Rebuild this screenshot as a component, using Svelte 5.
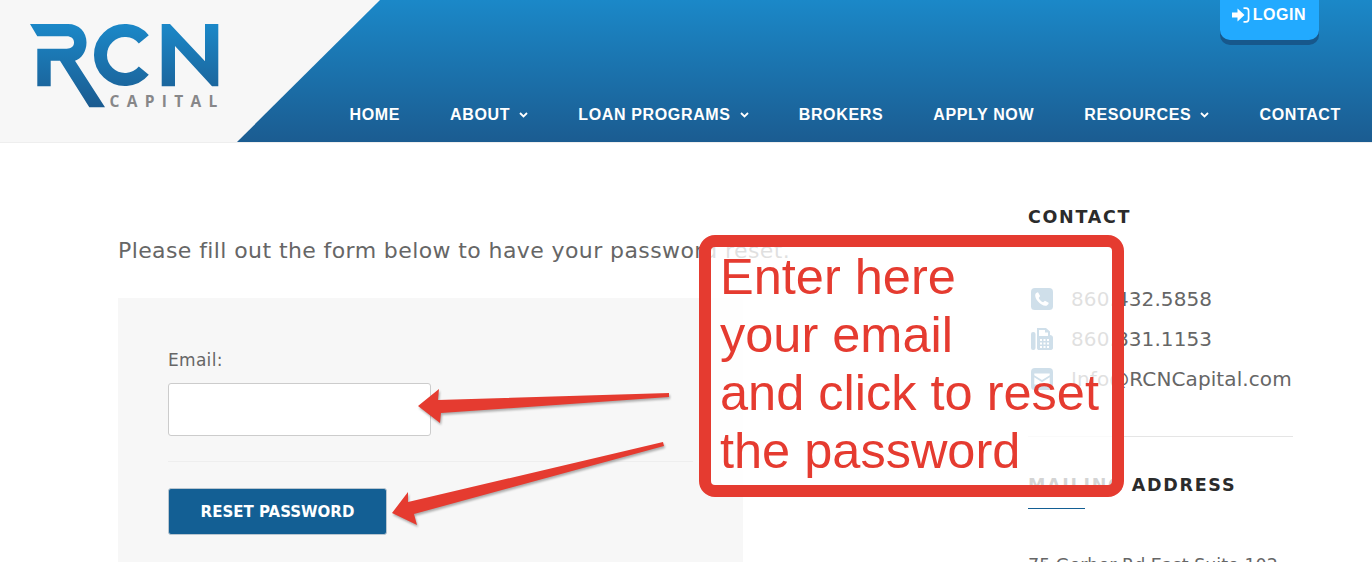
<script lang="ts">
    const navItems = [
        { label: 'HOME' },
        { label: 'ABOUT', sub: true },
        { label: 'LOAN PROGRAMS', sub: true },
        { label: 'BROKERS' },
        { label: 'APPLY NOW' },
        { label: 'RESOURCES', sub: true },
        { label: 'CONTACT' }
    ];
</script>

<div class="page">
    <header class="top">
        <a class="logo" href="/" aria-label="RCN Capital">
            <svg width="237" height="142" viewBox="0 0 237 142" aria-hidden="true">
                <defs>
                    <linearGradient id="logoBlue" gradientUnits="userSpaceOnUse" x1="0" y1="24" x2="0" y2="107">
                        <stop offset="0" stop-color="#1b88c8" />
                        <stop offset="1" stop-color="#1b5b90" />
                    </linearGradient>
                </defs>
                <path fill="url(#logoBlue)" d="M30 24H68C79 24 86.500 32 86.500 42.500C86.500 52 81 59 75 60.700L105 107.300H89.300L60 60.700H50.700V86.300H37.300V48.700H66.700C71 48.700 74 46.500 74 42.500C74 38.500 71 36.300 66.700 36.300H37.300Z" />
                <path fill="none" stroke="url(#logoBlue)" stroke-width="13" d="M143.800 39.300A24.500 24.500 0 1 0 143.800 70.700" />
                <path fill="url(#logoBlue)" d="M161.700 24H170L205 61.300V24H218.300V86.300H212L175 46V86.300H161.700Z" />
                <text class="capital" x="109.500" y="107">CAPITAL</text>
            </svg>
        </a>
        <div class="band">
            <a class="login" href="/">
                <svg width="18" height="16" viewBox="0 0 18 16" aria-hidden="true">
                    <path fill="#fff" d="M0 5.500H5.500V1.500L12.500 8L5.500 14.500V10.500H0Z" />
                    <path fill="none" stroke="#fff" stroke-width="1.700" d="M11.500 1.200H14C15.800 1.200 16.600 2.400 16.600 4V12C16.600 13.600 15.800 14.800 14 14.800H11.500" />
                </svg>
                LOGIN
            </a>
            <nav class="menu">
                {#each navItems as item}
                    <a href="/">
                        {item.label}
                        {#if item.sub}
                            <svg width="9" height="6" viewBox="0 0 9 6" aria-hidden="true">
                                <path fill="none" stroke="#fff" stroke-width="1.800" d="M1 1L4.500 4.500L8 1" />
                            </svg>
                        {/if}
                    </a>
                {/each}
            </nav>
        </div>
    </header>

    <main class="content">
        <section class="left">
            <p class="intro">Please fill out the form below to have your password reset.</p>
            <form class="card">
                <label for="email">Email:</label>
                <input id="email" type="email" />
                <hr />
                <button type="button">RESET PASSWORD</button>
            </form>
        </section>

        <aside class="side">
            <h4 class="first">CONTACT</h4>
            <ul>
                <li>
                    <svg width="22" height="22" viewBox="1 0 20 20" aria-hidden="true">
                        <rect x="1" y="0" width="20" height="20" rx="3.500" fill="#135f94" />
                        <path fill="#fff" d="M5 5.500C5.800 4.500 6.800 3.800 7.500 4L9.300 7.300L8 9C8.500 10.500 10.500 12.500 12 13L13.700 11.700L17 13.500C17.200 14.500 16.500 15.200 15.500 16C11 17.500 3.500 10 5 5.500Z" />
                    </svg>
                    <span>860.432.5858</span>
                </li>
                <li>
                    <svg width="22" height="24" viewBox="0 0 22 24" aria-hidden="true">
                        <rect x="0" y="5" width="4.500" height="18" rx="2" fill="#135f94" />
                        <path fill="#135f94" fill-rule="evenodd" d="M6 1H15L19 4.500V8C20.500 8 22 9 22 10.500V21C22 22.500 20.500 23 19.500 23H8C7 23 6 22.500 6 21ZM8 3V9H17V5.500H14V3ZM9 12V14H11V12ZM12.500 12V14H14.500V12ZM16 12V14H18V12ZM9 15.500V17.500H11V15.500ZM12.500 15.500V17.500H14.500V15.500ZM16 15.500V17.500H18V15.500ZM9 19V21H11V19ZM12.500 19V21H14.500V19ZM16 19V21H18V19Z" />
                    </svg>
                    <span>860.831.1153</span>
                </li>
                <li>
                    <svg width="22" height="22" viewBox="1 0 20 20" aria-hidden="true">
                        <rect x="1" y="0" width="20" height="20" rx="3.500" fill="#135f94" />
                        <path fill="#fff" d="M4 5H18V6.500L11 11L4 6.500ZM4 8.500L11 13L18 8.500V15H4Z" />
                    </svg>
                    <span>Info@RCNCapital.com</span>
                </li>
            </ul>
            <hr />
            <h4>MAILING ADDRESS</h4>
            <div class="underline"></div>
            <p class="address">75 Gerber Rd East Suite 102</p>
        </aside>
    </main>

    <svg class="arrows" width="1372" height="562" viewBox="0 0 1372 562" aria-hidden="true">
        <path fill="#e53b30" d="M669 393L669 397L441 413L440 423L418 406L439 389L438 400Z" />
        <path fill="#e53b30" d="M663 442L664 446L414 514L417 525L392 513L408 492L408 502Z" />
    </svg>

    <div class="note">
        Enter here<br />
        your email<br />
        and click to reset<br />
        the password
    </div>
</div>

<style>
    :global(body) {
        margin: 0;
        background: #fff;
    }

    .page {
        position: relative;
        height: 562px;
        overflow: hidden;
        font-family: "DejaVu Sans", Verdana, sans-serif;
        color: #666;
    }

    .top {
        display: flex;
        height: 142px;
        background: #f7f7f7;
        border-bottom: 1px solid #eee;
    }

    .logo {
        display: block;
        width: 237px;
        flex-shrink: 0;
    }

    .logo svg { display: block; }

    .capital {
        font-family: "Open Sans", sans-serif;
        font-weight: 700;
        font-size: 15.500px;
        letter-spacing: 7.300px;
        fill: #878789;
    }

    .band {
        flex: 1;
        display: flex;
        flex-direction: column;
        justify-content: space-between;
        background: linear-gradient(#1b88c8, #1b5c91);
        clip-path: polygon(143px 0, 100% 0, 100% 100%, 0 100%);
    }

    .login {
        align-self: flex-end;
        display: flex;
        align-items: center;
        gap: 3px;
        height: 40px;
        box-sizing: border-box;
        padding: 0 13px 10px 12px;
        margin-right: 53px;
        background: #22aaff;
        border-radius: 0 0 10px 10px;
        box-shadow: 0 5px 0 #17588c;
        color: #fff;
        font: bold 16px "Liberation Sans", Arial, sans-serif;
        letter-spacing: .5px;
        text-decoration: none;
    }

    .menu {
        display: flex;
        justify-content: flex-end;
        gap: 50px;
        padding: 0 31px 18px 0;
    }

    .menu a {
        display: flex;
        align-items: center;
        gap: 9px;
        color: #fff;
        font: bold 16px/18px "Liberation Sans", Arial, sans-serif;
        letter-spacing: .65px;
        text-decoration: none;
    }

    .content {
        display: grid;
        grid-template-columns: 625px 265px;
        column-gap: 285px;
        padding-left: 118px;
    }

    .intro {
        margin: 95px 0 34px;
        font-size: 22px;
        line-height: 26px;
        letter-spacing: .4px;
        white-space: nowrap;
    }

    .card {
        display: flex;
        flex-direction: column;
        align-items: flex-start;
        padding: 50px;
        background: #f7f7f7;
    }

    label {
        font-size: 17px;
        line-height: 24px;
        letter-spacing: .3px;
        margin-bottom: 11px;
    }

    input {
        width: 263px;
        height: 53px;
        box-sizing: border-box;
        background: #fff;
        border: 1px solid #ccc;
        border-radius: 3px;
    }

    .card hr {
        width: 100%;
        margin: 25px 0 26px;
        border: 0;
        border-top: 1px solid #eee;
    }

    button {
        width: 219px;
        height: 47px;
        background: #135f94;
        border: 1px solid #b9c6d0;
        border-radius: 3px;
        color: #fff;
        font: bold 15px "DejaVu Sans", Verdana, sans-serif;
    }

    h4 {
        margin: 36px 0 0;
        font-size: 17.500px;
        line-height: 24px;
        font-weight: bold;
        letter-spacing: 1.700px;
        color: #2b2b2b;
    }

    h4.first { margin-top: 62px; }

    ul {
        list-style: none;
        margin: 55px 0 0;
        padding: 0;
        display: flex;
        flex-direction: column;
        gap: 10px;
    }

    li {
        display: flex;
        align-items: center;
        height: 30px;
        font-size: 20px;
        letter-spacing: .1px;
    }

    li svg {
        flex-shrink: 0;
        margin: 0 18px 0 3px;
    }

    .side hr {
        margin: 42px 0 0;
        border: 0;
        border-top: 1px solid #e5e5e5;
    }

    .underline {
        width: 57px;
        height: 1px;
        margin-top: 11px;
        background: #135f94;
    }

    .address {
        margin: 43px 0 0;
        font-size: 17.500px;
        line-height: 26px;
        white-space: nowrap;
    }

    .arrows {
        position: absolute;
        top: 0;
        left: 0;
        filter: drop-shadow(1px 2px 1px rgba(0, 0, 0, .3));
    }

    .note {
        position: absolute;
        left: 699px;
        top: 235px;
        width: 425px;
        height: 262px;
        box-sizing: border-box;
        padding: 1px 0 0 9px;
        background: rgba(255, 255, 255, .8);
        border: 12px solid #e53b30;
        border-radius: 16px;
        color: #e53b30;
        font: 50.500px/58px "Liberation Sans", Arial, sans-serif;
    }
</style>
